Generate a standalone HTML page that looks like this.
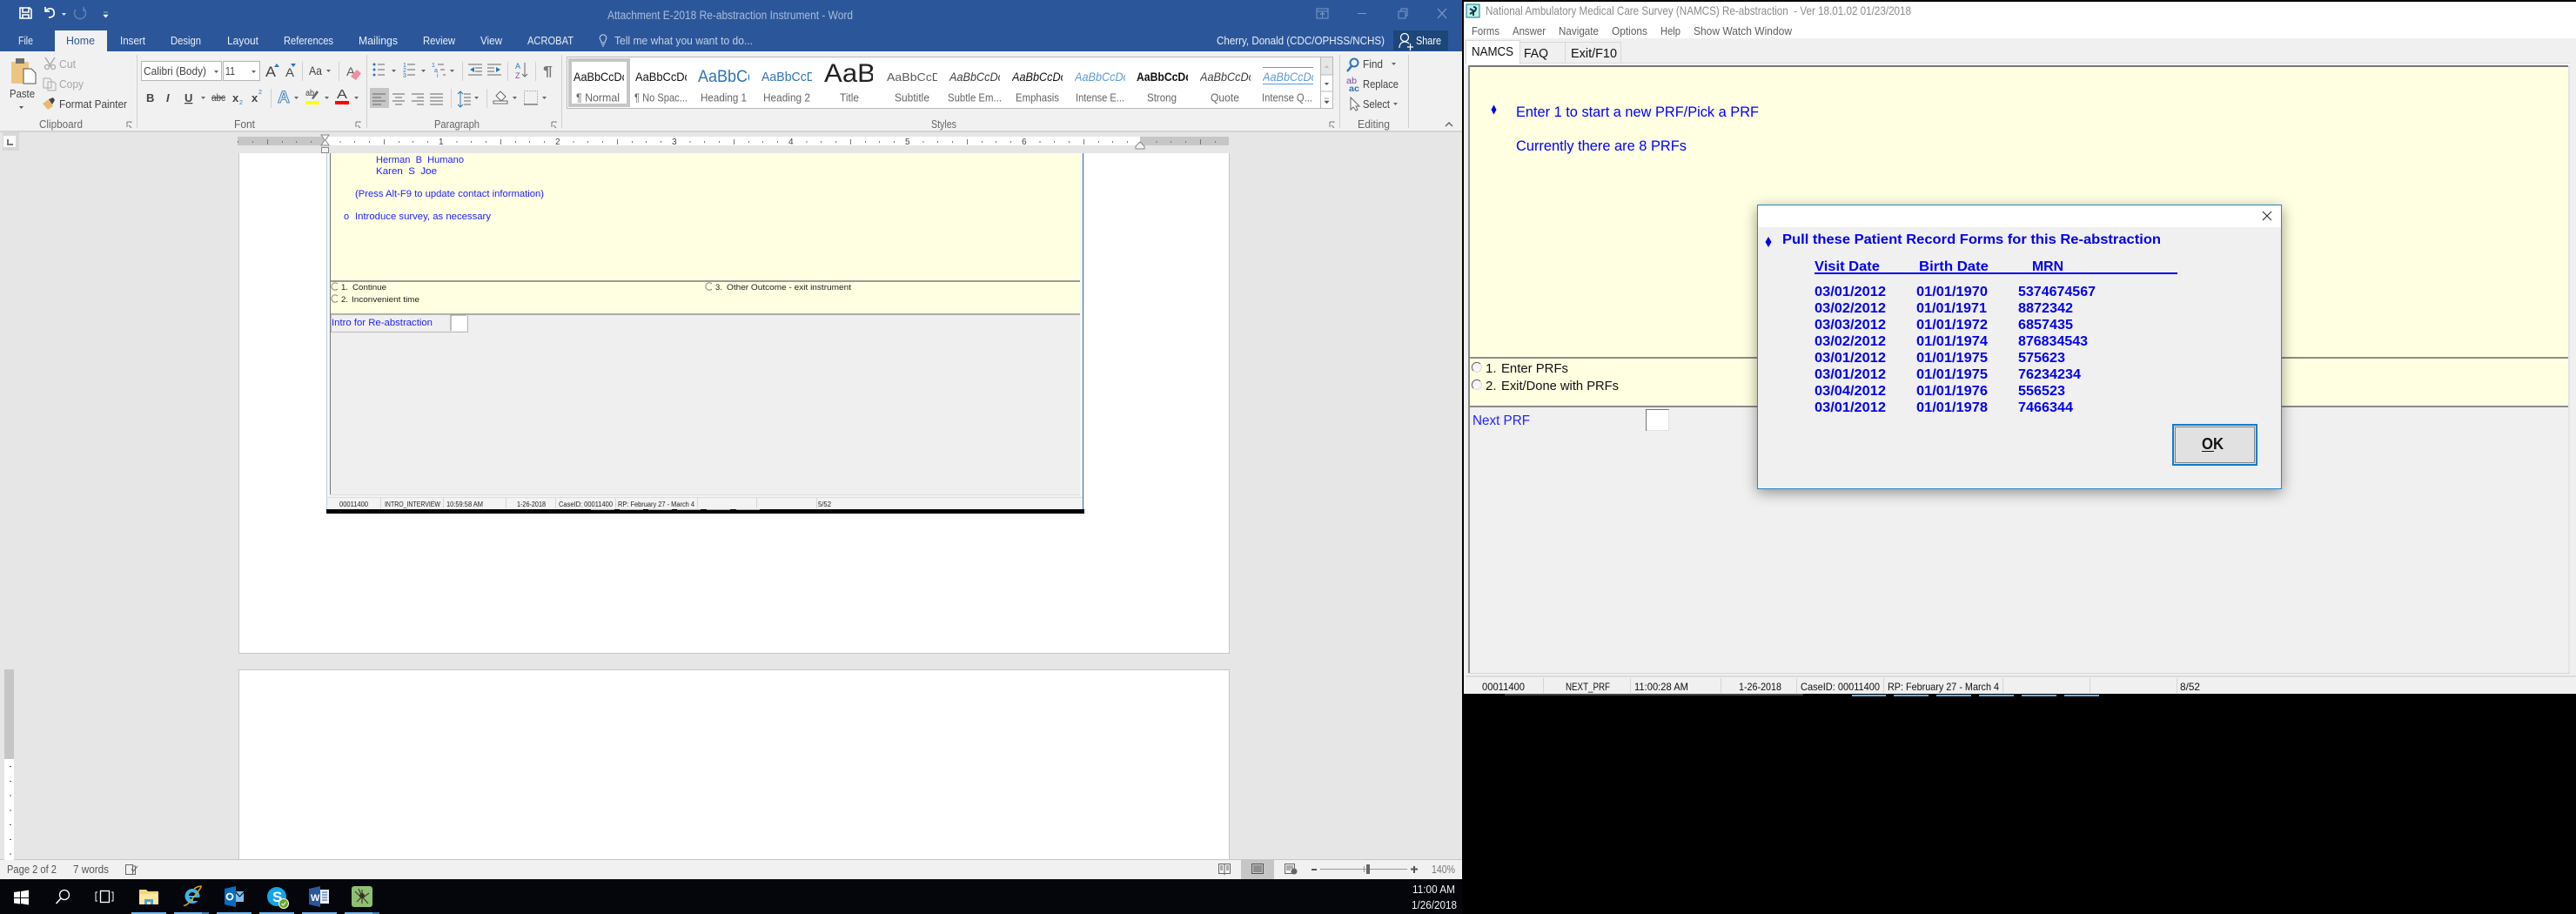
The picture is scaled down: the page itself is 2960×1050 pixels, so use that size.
<!DOCTYPE html>
<html><head><meta charset="utf-8"><title>Word and NAMCS</title>
<style>
html,body{margin:0;padding:0;background:#000;width:2960px;height:1050px;overflow:hidden}
svg{display:block;position:absolute;left:0;top:0}
text{font-family:"Liberation Sans",Arial,sans-serif;white-space:pre}
.w{fill:#e9eef6;font-size:13px}
.r{fill:#444;font-size:13px}
.d{fill:#a6a6a6;font-size:13px}
.l{fill:#666;font-size:13px}
.s{fill:#555;font-size:13px}
.sm{font-size:13px;fill:#111}
.bl{fill:#2222ff}
.nb{fill:#0000ff}
.em{fill:#222;font-size:9.5px}
.es{fill:#222;font-size:8px}
.ns{fill:#111;font-size:12px}
.dt{fill:#0000ee;font-size:15.5px;font-weight:bold}
</style></head><body>
<svg width="2960" height="1050" viewBox="0 0 2960 1050" xmlns="http://www.w3.org/2000/svg">
<defs>
<pattern id="rt" x="374" y="157" width="134" height="10" patternUnits="userSpaceOnUse">
<rect x="16.5" y="5" width="1" height="2" fill="#777"/><rect x="33" y="5" width="1" height="2" fill="#777"/><rect x="50" y="5" width="1" height="2" fill="#777"/><rect x="67" y="3" width="1" height="6" fill="#777"/><rect x="84" y="5" width="1" height="2" fill="#777"/><rect x="100" y="5" width="1" height="2" fill="#777"/><rect x="117" y="5" width="1" height="2" fill="#777"/>
</pattern>
<pattern id="vt" x="5" y="872" width="11" height="33.5" patternUnits="userSpaceOnUse">
<rect x="6" y="8" width="2" height="1" fill="#555"/><rect x="6" y="25" width="2" height="1" fill="#555"/>
</pattern>
<clipPath id="smp">
<rect x="659" y="68" width="58" height="32"/><rect x="730" y="68" width="59" height="32"/><rect x="802" y="68" width="59" height="32"/><rect x="875" y="68" width="58" height="32"/><rect x="947" y="68" width="56" height="32"/><rect x="1019" y="68" width="58" height="32"/><rect x="1091" y="68" width="58" height="32"/><rect x="1163" y="68" width="58" height="32"/><rect x="1235" y="68" width="58" height="32"/><rect x="1306" y="68" width="59" height="32"/><rect x="1379" y="68" width="58" height="32"/><rect x="1451" y="68" width="58" height="32"/>
</clipPath>
</defs>

<rect width="2960" height="1050" fill="#000"/>

<!-- WORD WINDOW -->
<rect x="0" y="0" width="1680" height="59" fill="#2b579a"/>
<rect x="0" y="59" width="1680" height="92" fill="#f1f1f1"/>
<rect x="0" y="151" width="1680" height="837" fill="#e6e6e6"/>
<rect x="0" y="150" width="1680" height="2" fill="#d4d4d4"/>
<rect x="0" y="988" width="1680" height="22" fill="#f1f1f1"/>
<rect x="0" y="987" width="1680" height="1" fill="#c6c6c6"/>

<!-- quick access -->
<path d="M23 9h11l2 2v10H23z M26 9v5h7V9 M26 21v-4h7v4" fill="none" stroke="#fff" stroke-width="1.6"/>
<path d="M62 14c0-3-3-5-6-4l-4 2 M52 8v5h5 M56 20c4 0 7-2 6-6" fill="none" stroke="#fff" stroke-width="1.7"/>
<path d="M71 15h5l-2.500 3z" fill="#dfe6f1"/>
<path d="M87 11a6.500 6.500 0 1 0 9-1 M96 8v5" fill="none" stroke="#5f81b6" stroke-width="1.500"/>
<path d="M119 14h5M119 17h5l-2.500 3z" fill="#fff" stroke="#fff" stroke-width=".6"/>
<text x="698" y="22" textLength="282" lengthAdjust="spacingAndGlyphs" style="font-size:13.500px;fill:#a9bcd8">Attachment E-2018 Re-abstraction Instrument - Word</text>
<path d="M1513 10h13v11h-13z M1513 13h13 M1519.500 20v-5 M1517 17l2.500-2.500 2.500 2.500" fill="none" stroke="#7e9ac5"/>
<rect x="1560" y="15" width="10" height="1" fill="#7e9ac5"/>
<path d="M1607 13h8v8h-8z M1610 13v-3h7v8h-2" fill="none" stroke="#7e9ac5"/>
<path d="M1652 10l10 11M1662 10l-10 11" stroke="#7e9ac5" stroke-width="1.200"/>

<!-- tabs -->
<rect x="63" y="35" width="60" height="24" fill="#f1f1f1"/>
<text class="w" x="21" y="51" textLength="17" lengthAdjust="spacingAndGlyphs">File</text>
<text x="76" y="51" textLength="33" lengthAdjust="spacingAndGlyphs" style="font-size:13px;fill:#2b579a">Home</text>
<text class="w" x="138" y="51" textLength="29" lengthAdjust="spacingAndGlyphs">Insert</text>
<text class="w" x="196" y="51" textLength="35" lengthAdjust="spacingAndGlyphs">Design</text>
<text class="w" x="261" y="51" textLength="36" lengthAdjust="spacingAndGlyphs">Layout</text>
<text class="w" x="326" y="51" textLength="57" lengthAdjust="spacingAndGlyphs">References</text>
<text class="w" x="412" y="51" textLength="45" lengthAdjust="spacingAndGlyphs">Mailings</text>
<text class="w" x="486" y="51" textLength="37" lengthAdjust="spacingAndGlyphs">Review</text>
<text class="w" x="552" y="51" textLength="25" lengthAdjust="spacingAndGlyphs">View</text>
<text class="w" x="606" y="51" textLength="53" lengthAdjust="spacingAndGlyphs">ACROBAT</text>
<path d="M690 46a3.800 3.800 0 1 1 6 0c-1 1-1 2-1 3h-4c0-1 0-2-1-3z M691 51h4 M692 53h2" fill="none" stroke="#cdd8e9"/>
<text x="706" y="51" textLength="159" lengthAdjust="spacingAndGlyphs" style="font-size:13px;fill:#c4d1e5">Tell me what you want to do...</text>
<text class="w" x="1398" y="51" textLength="193" lengthAdjust="spacingAndGlyphs">Cherry, Donald (CDC/OPHSS/NCHS)</text>
<rect x="1601" y="35" width="63" height="23" fill="#1d4679"/>
<circle cx="1614" cy="43" r="4.500" fill="none" stroke="#fff" stroke-width="1.300"/>
<path d="M1608 55c0-5 3-7 6-7s4 1 5 2 M1617 54h7M1620.500 50v8" fill="none" stroke="#fff" stroke-width="1.200"/>
<text class="w" x="1627" y="51" textLength="29" lengthAdjust="spacingAndGlyphs" style="fill:#fff">Share</text>

<!-- clipboard group -->
<rect x="13" y="71" width="20" height="25" rx="1" fill="#edc583"/>
<rect x="18" y="67" width="10" height="6" fill="#6f6f6f"/>
<path d="M27 79h9l5 5v12H27z" fill="#fff" stroke="#555"/>
<text class="r" x="11" y="112" textLength="29" lengthAdjust="spacingAndGlyphs">Paste</text>
<path d="M22 122h5l-2.500 3z" fill="#555"/>
<path d="M52 66l7 11M63 66l-7 11" stroke="#ababab" stroke-width="1.500"/><circle cx="54" cy="77" r="2.500" fill="none" stroke="#ababab" stroke-width="1.300"/><circle cx="61" cy="77" r="2.500" fill="none" stroke="#ababab" stroke-width="1.300"/>
<text class="d" x="68" y="78" textLength="19" lengthAdjust="spacingAndGlyphs">Cut</text>
<path d="M50 90h7l2 2v9h-9z M55 94h7l2 2v8h-9z" fill="#f1f1f1" stroke="#ababab"/>
<text class="d" x="68" y="101" textLength="28" lengthAdjust="spacingAndGlyphs">Copy</text>
<path d="M49 119l7-5 5 8-6 4z" fill="#e9b96e"/><path d="M56 114l5-2 2 3-3 5z" fill="#444"/>
<text class="r" x="68" y="124" textLength="78" lengthAdjust="spacingAndGlyphs">Format Painter</text>
<text class="l" x="45" y="147" textLength="50" lengthAdjust="spacingAndGlyphs">Clipboard</text>
<g fill="none" stroke="#777"><path d="M146 140h5v1M146 140v6"/><path d="M151 147l-3-3"/><path d="M409 140h5v1M409 140v6M414 147l-3-3"/><path d="M634 140h5v1M634 140v6M639 147l-3-3"/><path d="M1528 140h5v1M1528 140v6M1533 147l-3-3"/></g>
<g fill="#d0d0d0"><rect x="157" y="63" width="1" height="84"/><rect x="421" y="63" width="1" height="84"/><rect x="645" y="63" width="1" height="84"/><rect x="1539" y="63" width="1" height="84"/><rect x="1618" y="63" width="1" height="84"/><rect x="347" y="71" width="1" height="22"/><rect x="389" y="71" width="1" height="22"/><rect x="311" y="102" width="1" height="22"/><rect x="531" y="71" width="1" height="22"/><rect x="583" y="71" width="1" height="22"/><rect x="615" y="71" width="1" height="22"/><rect x="518" y="102" width="1" height="22"/><rect x="559" y="102" width="1" height="22"/></g>

<!-- font group -->
<rect x="162.500" y="70.500" width="92" height="22" fill="#fff" stroke="#b5b5b5"/>
<rect x="256.500" y="70.500" width="42" height="22" fill="#fff" stroke="#b5b5b5"/>
<text class="r" x="165" y="86" textLength="72" lengthAdjust="spacingAndGlyphs">Calibri (Body)</text>
<text class="r" x="259" y="86" textLength="11" lengthAdjust="spacingAndGlyphs">11</text>
<g fill="#666"><path d="M246 81h5l-2.500 3z"/><path d="M289 81h5l-2.500 3z"/><path d="M375 80h5l-2.500 3z"/><path d="M231 111h5l-2.500 3z"/><path d="M338 111h5l-2.500 3z"/><path d="M373 111h5l-2.500 3z"/><path d="M407 111h5l-2.500 3z"/><path d="M450 80h5l-2.500 3z"/><path d="M484 80h5l-2.500 3z"/><path d="M517 80h5l-2.500 3z"/><path d="M545 111h5l-2.500 3z"/><path d="M589 111h5l-2.500 3z"/><path d="M623 111h5l-2.500 3z"/></g>
<text x="305" y="88" textLength="12" lengthAdjust="spacingAndGlyphs" style="font-size:17px;fill:#444">A</text>
<path d="M315 77l3-4 3 4z" fill="#2e75b6"/>
<text x="328" y="88" textLength="10" lengthAdjust="spacingAndGlyphs" style="font-size:14px;fill:#444">A</text>
<path d="M334 73h6l-3 4z" fill="#2e75b6"/>
<text class="r" x="355" y="86" textLength="15" lengthAdjust="spacingAndGlyphs" style="font-size:14px">Aa</text>
<text x="398" y="87" textLength="10" lengthAdjust="spacingAndGlyphs" style="font-size:14px;fill:#5a5a5a">A</text>
<path d="M403 88l7-8 5 4-6 8z" fill="#ef8fa0"/>
<text x="168" y="117" textLength="8" style="font-size:13px;font-weight:bold;fill:#444">B</text>
<text x="191" y="117" textLength="5" style="font-size:13px;font-style:italic;font-weight:bold;fill:#444">I</text>
<text x="212" y="117" textLength="9" style="font-size:13px;font-weight:bold;fill:#444;text-decoration:underline">U</text>
<text x="243" y="116" textLength="16" lengthAdjust="spacingAndGlyphs" style="font-size:12px;fill:#444;text-decoration:line-through">abc</text>
<text x="267" y="117" textLength="8" style="font-size:13px;font-weight:bold;fill:#444">x</text><text x="275" y="120" style="font-size:7px;fill:#2e75b6">2</text>
<text x="289" y="117" textLength="8" style="font-size:13px;font-weight:bold;fill:#444">x</text><text x="297" y="108" style="font-size:7px;fill:#2e75b6">2</text>
<text x="319" y="118" textLength="14" lengthAdjust="spacingAndGlyphs" style="font-size:19px;font-weight:bold;fill:#dbe8f6;stroke:#2e75b6;stroke-width:.8">A</text>
<text x="351" y="110" textLength="10" lengthAdjust="spacingAndGlyphs" style="font-size:10px;fill:#444">ab</text>
<path d="M358 113l6-9 2 2-6 8z" fill="#666"/>
<rect x="351" y="116" width="16" height="4" fill="#ffff00"/>
<text x="387" y="113" textLength="12" lengthAdjust="spacingAndGlyphs" style="font-size:15px;fill:#444">A</text>
<rect x="385" y="116" width="16" height="4" fill="#ff0000"/>
<text class="l" x="269" y="147" textLength="24" lengthAdjust="spacingAndGlyphs">Font</text>

<!-- paragraph group -->
<g fill="#2e75b6"><circle cx="430" cy="74" r="1.500"/><circle cx="430" cy="80" r="1.500"/><circle cx="430" cy="86" r="1.500"/></g>
<path d="M434 74h8M434 80h8M434 86h8 M468 74h9M468 80h9M468 86h9 M503 74h7M506 80h5M509 86h3 M538 74h16M546 78h8M546 82h8M538 86h16 M560 74h16M560 78h8M560 82h8M560 86h16" stroke="#666" fill="none"/>
<g fill="#2e75b6" style="font-size:7px"><text x="463" y="77">1</text><text x="463" y="83">2</text><text x="463" y="89">3</text><text x="496" y="77">1</text><text x="499" y="83">a</text><text x="502" y="89">i</text></g>
<path d="M545 77l-5 3 5 3z M570 77l5 3-5 3z" fill="#2e75b6"/>
<text x="592" y="79" style="font-size:9px;fill:#2e75b6">A</text><text x="592" y="90" style="font-size:9px;fill:#7e4aa8">Z</text>
<path d="M603 72v16M600 85l3 3 3-3" fill="none" stroke="#666"/>
<text x="624" y="87" textLength="11" lengthAdjust="spacingAndGlyphs" style="font-size:16px;font-weight:bold;fill:#777">¶</text>
<rect x="425" y="101" width="22" height="23" fill="#c6c6c6"/>
<path d="M428 108h15M428 112h10M428 116h15M428 120h10 M451 108h14M454 112h8M451 116h14M454 120h8 M473 108h14M479 112h8M473 116h14M479 120h8 M494 108h15M494 112h15M494 116h15M494 120h15" stroke="#666" fill="none"/>
<path d="M533 108h8M533 112h8M533 116h8M533 120h8" stroke="#666"/>
<path d="M529 105v18M526 108l3-3 3 3M526 120l3 3 3-3" fill="none" stroke="#2e75b6"/>
<path d="M570 110l5-5 6 6-5 5z" fill="#f8f8f8" stroke="#666"/><rect x="567" y="116" width="16" height="3" fill="#fff" stroke="#666"/>
<rect x="602.500" y="104.500" width="15" height="15" fill="none" stroke="#777" stroke-dasharray="1 2"/><path d="M602 120h16" stroke="#555"/>
<text class="l" x="499" y="147" textLength="52" lengthAdjust="spacingAndGlyphs">Paragraph</text>

<!-- styles gallery -->
<rect x="651.500" y="65.500" width="880" height="59" fill="#fff" stroke="#b8b8b8"/>
<rect x="655" y="69" width="67" height="52" fill="#fff" stroke="#c6c6c6" stroke-width="4"/>
<g clip-path="url(#smp)">
<text x="659" y="93" textLength="62" lengthAdjust="spacingAndGlyphs" style="font-size:14px;fill:#111">AaBbCcDc</text>
<text x="730" y="93" textLength="63" lengthAdjust="spacingAndGlyphs" style="font-size:14px;fill:#111">AaBbCcDc</text>
<text x="802" y="94" textLength="66" lengthAdjust="spacingAndGlyphs" style="font-size:19px;fill:#2e74b5">AaBbCc</text>
<text x="875" y="93" textLength="62" lengthAdjust="spacingAndGlyphs" style="font-size:15px;fill:#2e74b5">AaBbCcD</text>
<text x="947" y="94" textLength="59" lengthAdjust="spacingAndGlyphs" style="font-size:30px;fill:#222">AaB</text>
<text x="1019" y="93" textLength="62" lengthAdjust="spacingAndGlyphs" style="font-size:13px;fill:#5a5a5a">AaBbCcD</text>
<text x="1091" y="93" textLength="62" lengthAdjust="spacingAndGlyphs" style="font-size:14px;font-style:italic;fill:#404040">AaBbCcDc</text>
<text x="1163" y="93" textLength="62" lengthAdjust="spacingAndGlyphs" style="font-size:14px;font-style:italic;fill:#111">AaBbCcDc</text>
<text x="1235" y="93" textLength="62" lengthAdjust="spacingAndGlyphs" style="font-size:14px;font-style:italic;fill:#5b9bd5">AaBbCcDc</text>
<text x="1306" y="93" textLength="63" lengthAdjust="spacingAndGlyphs" style="font-size:14px;font-weight:bold;fill:#111">AaBbCcDc</text>
<text x="1379" y="93" textLength="62" lengthAdjust="spacingAndGlyphs" style="font-size:14px;font-style:italic;fill:#404040">AaBbCcDc</text>
<text x="1451" y="93" textLength="62" lengthAdjust="spacingAndGlyphs" style="font-size:14px;font-style:italic;fill:#5b9bd5">AaBbCcDc</text>
</g>
<rect x="1451" y="77" width="58" height="1" fill="#5b9bd5"/><rect x="1451" y="96" width="58" height="1" fill="#5b9bd5"/>
<text class="l" x="662" y="116.500" textLength="50" lengthAdjust="spacingAndGlyphs">¶ Normal</text>
<text class="l" x="729" y="116.500" textLength="61" lengthAdjust="spacingAndGlyphs">¶ No Spac...</text>
<text class="l" x="805" y="116.500" textLength="53" lengthAdjust="spacingAndGlyphs">Heading 1</text>
<text class="l" x="877" y="116.500" textLength="54" lengthAdjust="spacingAndGlyphs">Heading 2</text>
<text class="l" x="965" y="116.500" textLength="22" lengthAdjust="spacingAndGlyphs">Title</text>
<text class="l" x="1028" y="116.500" textLength="40" lengthAdjust="spacingAndGlyphs">Subtitle</text>
<text class="l" x="1089" y="116.500" textLength="62" lengthAdjust="spacingAndGlyphs">Subtle Em...</text>
<text class="l" x="1167" y="116.500" textLength="50" lengthAdjust="spacingAndGlyphs">Emphasis</text>
<text class="l" x="1236" y="116.500" textLength="56" lengthAdjust="spacingAndGlyphs">Intense E...</text>
<text class="l" x="1318" y="116.500" textLength="34" lengthAdjust="spacingAndGlyphs">Strong</text>
<text class="l" x="1391" y="116.500" textLength="33" lengthAdjust="spacingAndGlyphs">Quote</text>
<text class="l" x="1450" y="116.500" textLength="58" lengthAdjust="spacingAndGlyphs">Intense Q...</text>
<rect x="1517" y="66" width="14" height="20" fill="#e6e6e6"/>
<path d="M1517.500 66v58M1517 86h14M1517 105h14" stroke="#b8b8b8" fill="none"/>
<path d="M1522 78h5l-2.500-3z" fill="#bbb"/><path d="M1522 95h5l-2.500 3z" fill="#555"/><path d="M1522 113h5M1522 116h5l-2.500 3z" fill="#555" stroke="#555" stroke-width=".5"/>
<text class="l" x="1070" y="147" textLength="29" lengthAdjust="spacingAndGlyphs">Styles</text>

<!-- editing group -->
<circle cx="1556" cy="72" r="4.500" fill="none" stroke="#2e75b6" stroke-width="2"/><path d="M1553 76l-5 6" stroke="#2e75b6" stroke-width="2.500"/>
<text class="r" x="1566" y="78" textLength="23" lengthAdjust="spacingAndGlyphs">Find</text><path d="M1599 72h5l-2.500 3z" fill="#666"/>
<text x="1547" y="96" textLength="12" lengthAdjust="spacingAndGlyphs" style="font-size:10px;fill:#7e4aa8">ab</text>
<text x="1550" y="105" textLength="12" lengthAdjust="spacingAndGlyphs" style="font-size:10px;font-weight:bold;fill:#2e75b6">ac</text>
<text class="r" x="1566" y="101" textLength="41" lengthAdjust="spacingAndGlyphs">Replace</text>
<path d="M1552 112v14l3-3 3 4 2-1-2-4h4z" fill="#fff" stroke="#666"/>
<text class="r" x="1566" y="124" textLength="31" lengthAdjust="spacingAndGlyphs">Select</text><path d="M1601 118h5l-2.500 3z" fill="#666"/>
<text class="l" x="1560" y="147" textLength="37" lengthAdjust="spacingAndGlyphs">Editing</text>
<path d="M1661 145l4-4 4 4" fill="none" stroke="#666" stroke-width="1.500"/>

<!-- horizontal ruler -->
<rect x="3" y="152" width="19" height="21" fill="#d8d8d8"/><rect x="4" y="156" width="14" height="13" fill="#fff"/>
<path d="M9 160v6h6" fill="none" stroke="#777" stroke-width="2"/>
<rect x="273" y="157" width="101" height="10" fill="#c6c6c6"/>
<rect x="374" y="157" width="936" height="10" fill="#fff"/>
<rect x="1310" y="157" width="102" height="10" fill="#c6c6c6"/>
<rect x="273" y="157" width="1139" height="10" fill="url(#rt)"/>
<g style="font-size:10px;fill:#444"><text x="504" y="166">1</text><text x="638" y="166">2</text><text x="772" y="166">3</text><text x="906" y="166">4</text><text x="1040" y="166">5</text><text x="1174" y="166">6</text></g>

<!-- pages -->
<rect x="275" y="176" width="1137" height="574" fill="#fff"/>
<path d="M274.500 176v574.500h1138V176" fill="none" stroke="#c6c6c6"/>
<rect x="274.500" y="769.500" width="1138" height="230" fill="#fff" stroke="#c6c6c6"/>
<rect x="0" y="987" width="1680" height="1" fill="#c6c6c6"/>
<rect x="0" y="988" width="1680" height="22" fill="#f1f1f1"/>
<path d="M369 155h9l-2 3-2 3 2 3 2 3h-9l2-3 2-3-2-3z" fill="#f4f4f4" stroke="#888"/><rect x="369.500" y="169.500" width="8" height="6" fill="#f4f4f4" stroke="#888"/>
<path d="M1310 163l5 5v3h-10v-3z" fill="#f4f4f4" stroke="#888"/>

<!-- vertical ruler -->
<rect x="5" y="769" width="11" height="103" fill="#c6c6c6"/>
<rect x="5" y="872" width="11" height="116" fill="#fff"/>
<rect x="5" y="872" width="11" height="116" fill="url(#vt)"/>

<!-- embedded screenshot -->
<rect x="375" y="176" width="871" height="414" fill="#f8f8f8"/>
<rect x="375" y="176" width="1" height="409" fill="#b5d0e6"/>
<rect x="379" y="176" width="862" height="146" fill="#ffffe1"/>
<rect x="379" y="324" width="862" height="36" fill="#ffffe1"/>
<rect x="379" y="322" width="862" height="2" fill="#999"/>
<rect x="379" y="360" width="862" height="2" fill="#aaa"/>
<rect x="379" y="362" width="862" height="206" fill="#efefef"/>
<rect x="379" y="176" width="1" height="392" fill="#777"/>
<g class="bl" style="font-size:11px">
<text x="432" y="187" textLength="101" lengthAdjust="spacingAndGlyphs">Herman  B  Humano</text>
<text x="432" y="200" textLength="70" lengthAdjust="spacingAndGlyphs">Karen  S  Joe</text>
<text x="408" y="226" textLength="217" lengthAdjust="spacingAndGlyphs">(Press Alt-F9 to update contact information)</text>
<text x="395" y="252" textLength="6">o</text>
<text x="408" y="252" textLength="156" lengthAdjust="spacingAndGlyphs">Introduce survey, as necessary</text>
</g>
<g fill="none" stroke="#777" stroke-width=".9"><path d="M388 326a4.200 4.200 0 1 0 0 6"/><path d="M388 340a4.200 4.200 0 1 0 0 6"/><path d="M818 326a4.200 4.200 0 1 0 0 6"/></g>
<text class="em" x="392" y="333">1.</text><text class="em" x="405" y="333" textLength="39" lengthAdjust="spacingAndGlyphs">Continue</text>
<text class="em" x="392" y="347">2.</text><text class="em" x="404" y="347" textLength="78" lengthAdjust="spacingAndGlyphs">Inconvenient time</text>
<text class="em" x="822" y="333">3.</text><text class="em" x="835" y="333" textLength="143" lengthAdjust="spacingAndGlyphs">Other Outcome - exit instrument</text>
<rect x="380.500" y="361.500" width="157" height="20" fill="none" stroke="#bbb"/>
<rect x="518" y="362" width="18" height="18" fill="#fff"/>
<path d="M518 380v-18h18" fill="none" stroke="#888"/>
<text class="bl" x="381" y="374" textLength="116" lengthAdjust="spacingAndGlyphs" style="font-size:11px">Intro for Re-abstraction</text>
<rect x="379" y="568" width="862" height="1" fill="#ddd"/>
<rect x="376" y="569" width="868" height="16" fill="#f3f3f3"/>
<rect x="375" y="571" width="869" height="1" fill="#ddd"/>
<g fill="#d6d6d6"><rect x="437" y="572" width="1" height="12"/><rect x="509" y="572" width="1" height="12"/><rect x="581" y="572" width="1" height="12"/><rect x="638" y="572" width="1" height="12"/><rect x="707" y="572" width="1" height="12"/><rect x="801" y="572" width="1" height="12"/><rect x="869" y="572" width="1" height="12"/><rect x="938" y="572" width="1" height="12"/></g>
<text class="es" x="390" y="582" textLength="33" lengthAdjust="spacingAndGlyphs">00011400</text>
<text class="es" x="442" y="582" textLength="64" lengthAdjust="spacingAndGlyphs">INTRO_INTERVIEW</text>
<text class="es" x="513" y="582" textLength="42" lengthAdjust="spacingAndGlyphs">10:59:58 AM</text>
<text class="es" x="594" y="582" textLength="33" lengthAdjust="spacingAndGlyphs">1-26-2018</text>
<text class="es" x="642" y="582" textLength="62" lengthAdjust="spacingAndGlyphs">CaseID: 00011400</text>
<text class="es" x="710" y="582" textLength="88" lengthAdjust="spacingAndGlyphs">RP: February 27 - March 4</text>
<text class="es" x="940" y="582" textLength="15" lengthAdjust="spacingAndGlyphs">5/52</text>
<rect x="375" y="585" width="871" height="5" fill="#000"/>
<rect x="1244" y="176" width="1" height="409" fill="#34709f"/>
<g fill="#6eb1e3"><rect x="679" y="585" width="27" height="1"/><rect x="712" y="585" width="27" height="1"/><rect x="745" y="585" width="27" height="1"/><rect x="778" y="585" width="27" height="1"/><rect x="812" y="585" width="27" height="1"/><rect x="846" y="585" width="27" height="1"/></g>

<!-- word status bar -->
<text class="s" x="8" y="1003" textLength="57" lengthAdjust="spacingAndGlyphs">Page 2 of 2</text>
<text class="s" x="84" y="1003" textLength="41" lengthAdjust="spacingAndGlyphs">7 words</text>
<path d="M144.500 993.500h8v11h-8zM152.500 995l3 0 0 9.500h-3 M151 998l2 3 5-6" fill="none" stroke="#666"/>
<path d="M1400.500 992.500h6l.5 1 .5-1h6v11h-6l-.5 1-.5-1h-6z M1407 993v10 M1402 995h3M1402 997h3M1402 999h3M1409 995h3M1409 997h3M1409 999h3" fill="none" stroke="#666"/>
<rect x="1426" y="988" width="38" height="22" fill="#c6c6c6"/>
<path d="M1438.500 992.500h13v11h-13z M1440 995h10M1440 997h10M1440 999h10M1440 1001h10" fill="none" stroke="#555"/>
<path d="M1476.500 992.500h11v11h-11z M1478 995h8M1478 997h8M1478 999h5" fill="none" stroke="#666"/><circle cx="1487" cy="1001" r="3.500" fill="#666"/>
<rect x="1507" y="998" width="6" height="2" fill="#555"/>
<rect x="1517" y="998" width="100" height="1" fill="#999"/><rect x="1567" y="995" width="1" height="7" fill="#999"/>
<rect x="1570" y="993" width="4" height="11" fill="#666"/>
<path d="M1621 998.500h8M1625 995v8" stroke="#555" stroke-width="2"/>
<text class="s" x="1645" y="1003" textLength="27" lengthAdjust="spacingAndGlyphs" style="fill:#777">140%</text>

<!-- taskbar -->
<rect x="0" y="1010" width="1680" height="40" fill="#05060c"/>
<path d="M16 1025l7-1v7h-7z M24 1024l9-1.500V1031h-9z M16 1032h7v6.500l-7-1z M24 1032h9v7.500l-9-1.500z" fill="#fff"/>
<circle cx="74" cy="1028" r="5.500" fill="none" stroke="#fff" stroke-width="1.300"/><path d="M70 1032l-5.500 6" stroke="#fff" stroke-width="1.500"/>
<rect x="115.500" y="1023.500" width="10" height="13" fill="none" stroke="#fff" stroke-width="1.300"/><path d="M112 1025h-2v10h2 M128 1025h2v10h-2" fill="none" stroke="#fff"/>
<path d="M160 1022h8l2 2h12v15h-22z" fill="#f6d67b"/><rect x="160" y="1027" width="22" height="12" fill="#fce6a2"/>
<path d="M166 1039v-6h10v6h-3v-3h-4v3z" fill="#4ba6da"/>
<circle cx="221" cy="1029.500" r="8.500" fill="#3cb3ea"/><circle cx="221" cy="1029" r="4" fill="#05060c"/><rect x="217" y="1029" width="12" height="2" fill="#3cb3ea"/><rect x="222" y="1031" width="10" height="4" fill="#05060c"/>
<path d="M211 1040c2 1 6-2 12-10 6-7 9-12 8-12-2 0-5 1-8 3" fill="none" stroke="#d9a520" stroke-width="1.500"/>
<path d="M258 1021l13-3v24l-13-3z" fill="#0a6cc0"/><rect x="271" y="1024" width="9" height="12" fill="#7fbfea"/><path d="M271 1025l4.500 5 4.500-5" fill="none" stroke="#05060c"/>
<circle cx="264" cy="1030" r="3.500" fill="none" stroke="#fff" stroke-width="1.800"/>
<circle cx="318" cy="1030" r="11" fill="#12a5e8"/>
<text x="313" y="1036" style="font-size:17px;font-weight:bold;fill:#fff">S</text>
<circle cx="326" cy="1038" r="5.500" fill="#68a81e" stroke="#fff"/><path d="M323.500 1038l2 2 3-4" fill="none" stroke="#fff"/>
<rect x="368" y="1022" width="10" height="16" fill="#eaf0f8"/><path d="M370 1025h6M370 1028h6M370 1031h6M370 1034h6" stroke="#2b579a"/>
<path d="M355 1021l13-3v24l-13-3z" fill="#2b579a"/>
<text x="357" y="1035" style="font-size:11px;font-weight:bold;fill:#fff">W</text>
<rect x="404" y="1018" width="24" height="24" rx="3" fill="#8fc071"/>
<path d="M416 1022v16M408 1024l8 8 8-6M410 1036l6-6 7 8M412 1021l4 9" stroke="#443a2f" stroke-width="1.200" fill="none"/><circle cx="416" cy="1029" r="3" fill="#3a2f28"/>
<g fill="#76b9ed"><rect x="151" y="1048" width="40" height="2"/><rect x="200" y="1048" width="40" height="2"/><rect x="249" y="1048" width="40" height="2"/><rect x="298" y="1048" width="40" height="2"/><rect x="347" y="1048" width="40" height="2"/><rect x="396" y="1048" width="40" height="2"/></g>
<rect x="232" y="1048" width="8" height="2" fill="#4a7ea9"/><rect x="428" y="1048" width="8" height="2" fill="#4a7ea9"/>
<text x="1623" y="1026" textLength="49" lengthAdjust="spacingAndGlyphs" style="font-size:13px;fill:#f2f2f2">11:00 AM</text>
<text x="1622" y="1044" textLength="52" lengthAdjust="spacingAndGlyphs" style="font-size:13px;fill:#f2f2f2">1/26/2018</text>

<!-- NAMCS WINDOW -->
<rect x="1682" y="2" width="1278" height="795" fill="#f0f0f0"/>
<rect x="1682" y="2" width="1278" height="42" fill="#fff"/>
<rect x="1685" y="5" width="15" height="15" fill="#c4ecec" stroke="#0b7f7f"/>
<path d="M1693 8c3 0 4 2 2 4l-2 2v4M1689 10l5 3-5 3" fill="none" stroke="#073f3f" stroke-width="2"/>
<text x="1707" y="17" textLength="489" lengthAdjust="spacingAndGlyphs" style="font-size:14px;fill:#8c8c8c">National Ambulatory Medical Care Survey (NAMCS) Re-abstraction  - Ver 18.01.02 01/23/2018</text>
<g style="font-size:13px;fill:#5e5e5e">
<text x="1691" y="40" textLength="32" lengthAdjust="spacingAndGlyphs">Forms</text>
<text x="1738" y="40" textLength="38" lengthAdjust="spacingAndGlyphs">Answer</text>
<text x="1791" y="40" textLength="46" lengthAdjust="spacingAndGlyphs">Navigate</text>
<text x="1852" y="40" textLength="41" lengthAdjust="spacingAndGlyphs">Options</text>
<text x="1908" y="40" textLength="23" lengthAdjust="spacingAndGlyphs">Help</text>
<text x="1946" y="40" textLength="113" lengthAdjust="spacingAndGlyphs">Show Watch Window</text>
</g>
<rect x="1684" y="72" width="1269" height="3" fill="#fff"/>
<rect x="1684" y="72" width="1269" height="1" fill="#d9d9d9"/>
<rect x="1746.500" y="48.500" width="52" height="24" fill="#f0f0f0" stroke="#d9d9d9"/>
<rect x="1798.500" y="48.500" width="64" height="24" fill="#f0f0f0" stroke="#d9d9d9"/>
<rect x="1684.500" y="46.500" width="62" height="27" fill="#fff" stroke="#d9d9d9"/>
<rect x="1685" y="70" width="61" height="5" fill="#fff"/>
<text x="1691" y="64" textLength="48" lengthAdjust="spacingAndGlyphs" style="font-size:15px;fill:#111">NAMCS</text>
<text x="1751" y="66" textLength="28" lengthAdjust="spacingAndGlyphs" style="font-size:15px;fill:#111">FAQ</text>
<text x="1805" y="66" textLength="53" lengthAdjust="spacingAndGlyphs" style="font-size:15px;fill:#111">Exit/F10</text>

<rect x="1689" y="76" width="1262" height="334" fill="#ffffe1"/>
<rect x="1687" y="75" width="1266" height="2" fill="#777"/>
<rect x="1689" y="412" width="1262" height="54" fill="#ffffe1"/>
<rect x="1687" y="410" width="1266" height="2" fill="#8c8c8c"/>
<rect x="1687" y="466" width="1266" height="2" fill="#8c8c8c"/>
<rect x="1687" y="75" width="2" height="698" fill="#8a8a8a"/>
<rect x="1687" y="773" width="1266" height="1" fill="#d6d6d6"/>
<rect x="2951" y="75" width="2" height="698" fill="#e4e4e4"/>
<rect x="1684" y="776" width="1276" height="2" fill="#dcdcdc"/>
<path d="M1716.500 120.500l3 5.500-3 5.500-3-5.500z" fill="#0000ee"/>
<text class="nb" x="1742" y="134" textLength="279" lengthAdjust="spacingAndGlyphs" style="font-size:17px">Enter 1 to start a new PRF/Pick a PRF</text>
<text class="nb" x="1742" y="173" textLength="196" lengthAdjust="spacingAndGlyphs" style="font-size:17px">Currently there are 8 PRFs</text>
<g fill="#f6f6f6" stroke="#dcdcdc"><circle cx="1697" cy="422" r="5.500"/><circle cx="1697" cy="442" r="5.500"/></g>
<path d="M1701 418a5.500 5.500 0 0 0-8 8M1701 438a5.500 5.500 0 0 0-8 8" fill="none" stroke="#666"/>
<g style="font-size:15px;fill:#111">
<text x="1707" y="428">1.</text><text x="1725" y="428" textLength="77" lengthAdjust="spacingAndGlyphs">Enter PRFs</text>
<text x="1707" y="448">2.</text><text x="1725" y="448" textLength="135" lengthAdjust="spacingAndGlyphs">Exit/Done with PRFs</text>
</g>
<text x="1692" y="488" textLength="66" lengthAdjust="spacingAndGlyphs" style="font-size:16px;fill:#2222ff">Next PRF</text>
<rect x="1891.500" y="470.500" width="26" height="24" fill="#fff" stroke="#e0e0e0"/>
<path d="M1891.500 495v-24.500h26" fill="none" stroke="#777"/>

<!-- NAMCS status -->
<g fill="#d4d4d4"><rect x="1773" y="779" width="1" height="17"/><rect x="1873" y="779" width="1" height="17"/><rect x="1977" y="779" width="1" height="17"/><rect x="2064" y="779" width="1" height="17"/><rect x="2164" y="779" width="1" height="17"/><rect x="2301" y="779" width="1" height="17"/><rect x="2401" y="779" width="1" height="17"/><rect x="2501" y="779" width="1" height="17"/></g>
<text class="ns" x="1703" y="793" textLength="49" lengthAdjust="spacingAndGlyphs">00011400</text>
<text class="ns" x="1799" y="793" textLength="51" lengthAdjust="spacingAndGlyphs">NEXT_PRF</text>
<text class="ns" x="1878" y="793" textLength="62" lengthAdjust="spacingAndGlyphs">11:00:28 AM</text>
<text class="ns" x="1998" y="793" textLength="49" lengthAdjust="spacingAndGlyphs">1-26-2018</text>
<text class="ns" x="2069" y="793" textLength="91" lengthAdjust="spacingAndGlyphs">CaseID: 00011400</text>
<text class="ns" x="2169" y="793" textLength="128" lengthAdjust="spacingAndGlyphs">RP: February 27 - March 4</text>
<text class="ns" x="2505" y="793" textLength="23" lengthAdjust="spacingAndGlyphs">8/52</text>
<rect x="1729" y="797" width="343" height="2" fill="#444"/>
<g fill="#6eb1e3"><rect x="2128" y="798" width="39" height="2"/><rect x="2176" y="798" width="40" height="2"/><rect x="2225" y="798" width="40" height="2"/><rect x="2274" y="798" width="40" height="2"/><rect x="2323" y="798" width="40" height="2"/><rect x="2372" y="798" width="40" height="2"/></g>

<!-- dialog -->
<rect x="2019.500" y="235.500" width="602" height="326" fill="#f0f0f0" stroke="#2a86c8" style="filter:drop-shadow(0 4px 8px rgba(0,0,0,.4))"/>
<rect x="2020" y="236" width="601" height="25" fill="#fff"/>
<path d="M2600 243l10 10M2610 243l-10 10" stroke="#222"/>
<path d="M2032 272l3.500 6-3.500 6-3.500-6z" fill="#0000ee"/>
<text class="dt" x="2048" y="280" textLength="435" lengthAdjust="spacingAndGlyphs">Pull these Patient Record Forms for this Re-abstraction</text>
<text class="dt" x="2085" y="311" textLength="75" lengthAdjust="spacingAndGlyphs">Visit Date</text>
<text class="dt" x="2205" y="311" textLength="80" lengthAdjust="spacingAndGlyphs">Birth Date</text>
<text class="dt" x="2335" y="311" textLength="36" lengthAdjust="spacingAndGlyphs">MRN</text>
<rect x="2085" y="313" width="417" height="2" fill="#0000ee"/>
<g>
<text class="dt" x="2085" y="340" textLength="82" lengthAdjust="spacingAndGlyphs">03/01/2012</text><text class="dt" x="2202" y="340" textLength="82" lengthAdjust="spacingAndGlyphs">01/01/1970</text><text class="dt" x="2319" y="340" textLength="89" lengthAdjust="spacingAndGlyphs">5374674567</text>
<text class="dt" x="2085" y="359" textLength="82" lengthAdjust="spacingAndGlyphs">03/02/2012</text><text class="dt" x="2202" y="359" textLength="81" lengthAdjust="spacingAndGlyphs">01/01/1971</text><text class="dt" x="2319" y="359" textLength="63" lengthAdjust="spacingAndGlyphs">8872342</text>
<text class="dt" x="2085" y="378" textLength="82" lengthAdjust="spacingAndGlyphs">03/03/2012</text><text class="dt" x="2202" y="378" textLength="82" lengthAdjust="spacingAndGlyphs">01/01/1972</text><text class="dt" x="2319" y="378" textLength="63" lengthAdjust="spacingAndGlyphs">6857435</text>
<text class="dt" x="2085" y="397" textLength="82" lengthAdjust="spacingAndGlyphs">03/02/2012</text><text class="dt" x="2202" y="397" textLength="82" lengthAdjust="spacingAndGlyphs">01/01/1974</text><text class="dt" x="2319" y="397" textLength="80" lengthAdjust="spacingAndGlyphs">876834543</text>
<text class="dt" x="2085" y="416" textLength="82" lengthAdjust="spacingAndGlyphs">03/01/2012</text><text class="dt" x="2202" y="416" textLength="82" lengthAdjust="spacingAndGlyphs">01/01/1975</text><text class="dt" x="2319" y="416" textLength="54" lengthAdjust="spacingAndGlyphs">575623</text>
<text class="dt" x="2085" y="435" textLength="82" lengthAdjust="spacingAndGlyphs">03/01/2012</text><text class="dt" x="2202" y="435" textLength="82" lengthAdjust="spacingAndGlyphs">01/01/1975</text><text class="dt" x="2319" y="435" textLength="72" lengthAdjust="spacingAndGlyphs">76234234</text>
<text class="dt" x="2085" y="454" textLength="82" lengthAdjust="spacingAndGlyphs">03/04/2012</text><text class="dt" x="2202" y="454" textLength="82" lengthAdjust="spacingAndGlyphs">01/01/1976</text><text class="dt" x="2319" y="454" textLength="54" lengthAdjust="spacingAndGlyphs">556523</text>
<text class="dt" x="2085" y="473" textLength="82" lengthAdjust="spacingAndGlyphs">03/01/2012</text><text class="dt" x="2202" y="473" textLength="82" lengthAdjust="spacingAndGlyphs">01/01/1978</text><text class="dt" x="2319" y="473" textLength="63" lengthAdjust="spacingAndGlyphs">7466344</text>
</g>
<rect x="2497" y="488" width="96" height="46" fill="#e1e1e1" stroke="#0f7ecd" stroke-width="2"/>
<rect x="2499.500" y="490.500" width="91" height="41" fill="none" stroke="#222" stroke-dasharray="1 1"/>
<text x="2530" y="516" textLength="25" lengthAdjust="spacingAndGlyphs" style="font-size:18px;font-weight:bold;fill:#111">OK</text>
<rect x="2530" y="518" width="14" height="1" fill="#111"/>
</svg>
</body></html>
